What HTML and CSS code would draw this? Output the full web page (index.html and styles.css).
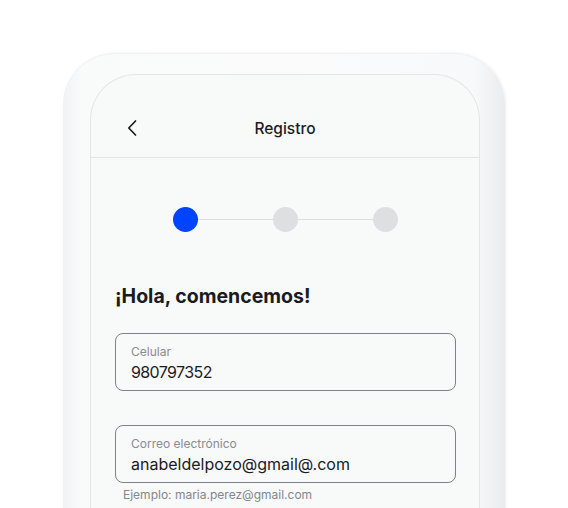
FILE: index.html
```html
<!DOCTYPE html>
<html lang="es">
<head>
<meta charset="utf-8">
<title>Registro</title>
<link rel="stylesheet" href="styles.css">
</head>
<body>
<div class="stage">
  <div class="phone">
    <div class="screen">
      <header class="topbar">
        <button class="back" aria-label="Volver">
          <svg width="10" height="16" viewBox="0 0 10 16"><path d="M8.5 1 L1.8 8 L8.5 15" fill="none" stroke="#1b1b1f" stroke-width="1.7" stroke-linecap="round" stroke-linejoin="round"/></svg>
        </button>
        <h1 class="title">Registro</h1>
      </header>
      <main class="content">
        <div class="stepper">
          <span class="dot active"></span>
          <span class="bar"></span>
          <span class="dot"></span>
          <span class="bar"></span>
          <span class="dot"></span>
        </div>
        <h2 class="greeting">¡Hola, comencemos!</h2>
        <div class="field">
          <span class="label">Celular</span>
          <span class="value value-number">980797352</span>
        </div>
        <div class="field field-email">
          <span class="label">Correo electrónico</span>
          <span class="value">anabeldelpozo@gmail@.com</span>
        </div>
        <p class="helper">Ejemplo: maria.perez@gmail.com</p>
      </main>
    </div>
  </div>
</div>
</body>
</html>
```
FILE: styles.css
```css
* { box-sizing: border-box; }
html, body {
  margin: 0;
  padding: 0;
  background: #ffffff;
  overflow: hidden;
}
body {
  font-family: "Inter", "Liberation Sans", sans-serif;
  color: #1b1b1f;
}
.stage {
  width: 568px;
  height: 508px;
  padding: 53px 0 0 63px;
  overflow: hidden;
}
.phone {
  width: 442px;
  height: 520px;
  border-radius: 52px 52px 0 0;
  padding: 21px 25px 0 27px;
  background: linear-gradient(to right, #f1f2f4 0%, #f9fafa 4%, #fbfbfc 50%, #f8f9fa 93%, #e9ebed 100%);
  box-shadow: 1px 0 3px rgba(0,0,0,0.07), inset 0 1px 0 #f0f1f2;
}
.screen {
  height: 100%;
  border: 1px solid #e4e5e7;
  border-bottom: none;
  border-radius: 46px 46px 0 0;
  background: #f8f9f9;
}
.topbar {
  position: relative;
  height: 83px;
  padding-top: 24px;
  border-bottom: 1px solid #e3e4e6;
  display: flex;
  align-items: flex-start;
  justify-content: center;
}
.back {
  position: absolute;
  left: 36px;
  top: 45px;
  padding: 0;
  border: none;
  background: none;
  display: flex;
}
.title {
  margin: 0;
  height: 58px;
  display: flex;
  align-items: center;
  font-size: 15.5px;
  font-weight: 500;
  color: #1b1b1f;
}
.content {
  padding: 49px 23px 0 24px;
}
.stepper {
  display: flex;
  align-items: center;
  justify-content: center;
}
.dot {
  width: 25px;
  height: 25px;
  border-radius: 50%;
  background: #dedfe1;
  flex: none;
}
.dot.active { background: #0044ff; }
.bar {
  width: 75px;
  height: 1px;
  background: #dcdde0;
}
.greeting {
  margin: 52px 0 0;
  font-size: 19.5px;
  font-weight: 700;
  line-height: 24px;
}
.field {
  margin-top: 25px;
  height: 58px;
  border: 1px solid #80808a;
  border-radius: 8px;
  padding: 10px 15px 0;
  display: flex;
  flex-direction: column;
}
.field-email { margin-top: 34px; }
.label {
  font-size: 12px;
  line-height: 15px;
  color: #8a8a90;
}
.value {
  margin-top: 3px;
  font-size: 16px;
  line-height: 20px;
  color: #1b1b1f;
}
.value-number { letter-spacing: -0.6px; }
.helper {
  margin: 4px 0 0 8px;
  font-size: 12px;
  line-height: 15px;
  color: #85858b;
}
```
